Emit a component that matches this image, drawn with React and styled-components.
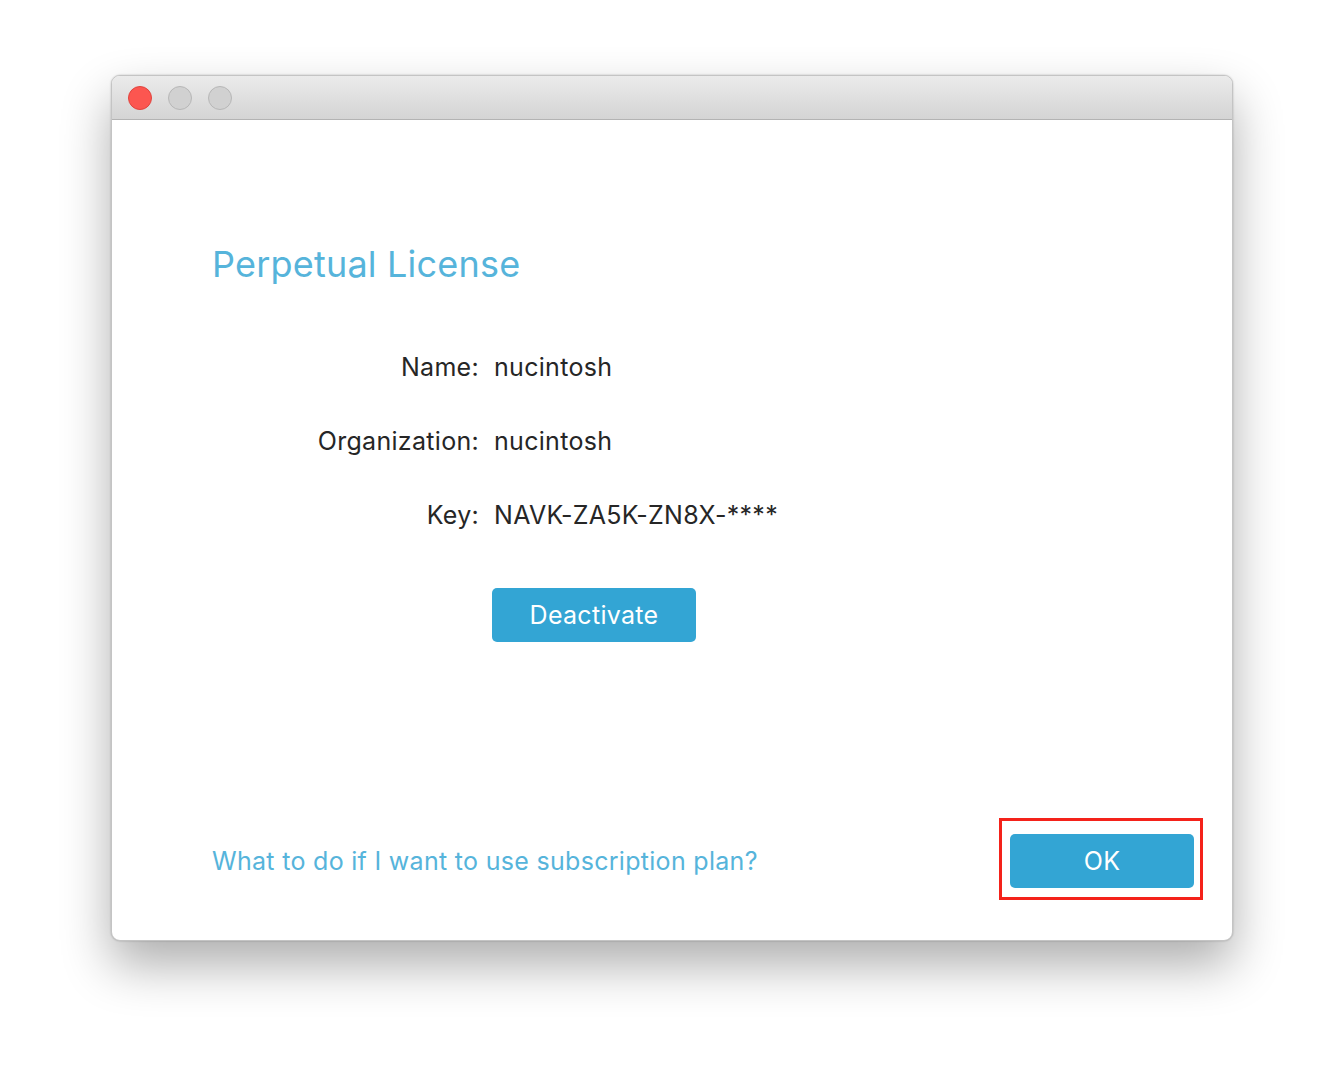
import styled, { createGlobalStyle } from "styled-components";

const GlobalStyle = createGlobalStyle`
  body {
    margin: 0;
    background: #ffffff;
    font-family: Inter, "Noto Sans", sans-serif;
  }
`;

const Page = styled.div`
  width: 1344px;
  height: 1088px;
  padding: 75px 0 0 111px;
  box-sizing: border-box;
`;

const Window = styled.div`
  width: 1122px;
  height: 866px;
  display: flex;
  flex-direction: column;
  background: #ffffff;
  border: 1px solid #c4c4c4;
  border-radius: 9px;
  box-sizing: border-box;
  overflow: hidden;
  box-shadow: 0 24px 50px rgba(0, 0, 0, 0.32), 0 0 2px rgba(0, 0, 0, 0.25);
`;

const TitleBar = styled.div`
  height: 43px;
  flex-shrink: 0;
  display: flex;
  align-items: center;
  gap: 16px;
  padding-left: 16px;
  background: linear-gradient(#ebebeb, #d4d4d4);
  border-bottom: 1px solid #b3b3b3;
`;

const Light = styled.span`
  width: 24px;
  height: 24px;
  border-radius: 50%;
  box-sizing: border-box;
  background: ${(p) => (p.$red ? "#fc5650" : "#d1d1d1")};
  border: 1px solid ${(p) => (p.$red ? "#e0443e" : "#b7b7b7")};
`;

const Content = styled.div`
  flex: 1;
  display: flex;
  flex-direction: column;
  padding: 122px 38px 52px 100px;
`;

const Title = styled.h1`
  margin: 0;
  font-size: 36px;
  line-height: 44px;
  font-weight: 400;
  letter-spacing: 0.2px;
  color: #56b4db;
`;

const Fields = styled.div`
  margin-top: 66px;
  display: grid;
  grid-template-columns: 267px auto;
  column-gap: 15px;
  row-gap: 44px;
  font-size: 25px;
  line-height: 30px;
  letter-spacing: 0.3px;
  color: #262626;
`;

const Label = styled.div`
  text-align: right;
`;

const Value = styled.div``;

const Button = styled.button`
  position: relative;
  height: 54px;
  width: ${(p) => p.$width}px;
  border: none;
  border-radius: 5px;
  background: #33a5d4;
  color: #ffffff;
  font-family: inherit;
  font-size: 25px;
  letter-spacing: 0.3px;
  cursor: pointer;
`;

const DeactivateRow = styled.div`
  margin-top: 58px;
  padding-left: 280px;
`;

const Footer = styled.div`
  margin-top: auto;
  display: flex;
  align-items: center;
  justify-content: space-between;
`;

const Link = styled.a`
  font-size: 25px;
  letter-spacing: 0.3px;
  color: #56b4db;
  text-decoration: none;
  cursor: pointer;
`;

const Highlight = styled.span`
  position: absolute;
  top: -16px;
  left: -11px;
  right: -9px;
  bottom: -12px;
  border: 3px solid #f4221a;
  pointer-events: none;
`;

export default function App() {
  return (
    <>
      <GlobalStyle />
      <Page>
        <Window>
          <TitleBar>
            <Light $red />
            <Light />
            <Light />
          </TitleBar>
          <Content>
            <Title>Perpetual License</Title>
            <Fields>
              <Label>Name:</Label>
              <Value>nucintosh</Value>
              <Label>Organization:</Label>
              <Value>nucintosh</Value>
              <Label>Key:</Label>
              <Value>NAVK-ZA5K-ZN8X-****</Value>
            </Fields>
            <DeactivateRow>
              <Button $width={204}>Deactivate</Button>
            </DeactivateRow>
            <Footer>
              <Link>What to do if I want to use subscription plan?</Link>
              <Button $width={184}>
                OK
                <Highlight />
              </Button>
            </Footer>
          </Content>
        </Window>
      </Page>
    </>
  );
}
